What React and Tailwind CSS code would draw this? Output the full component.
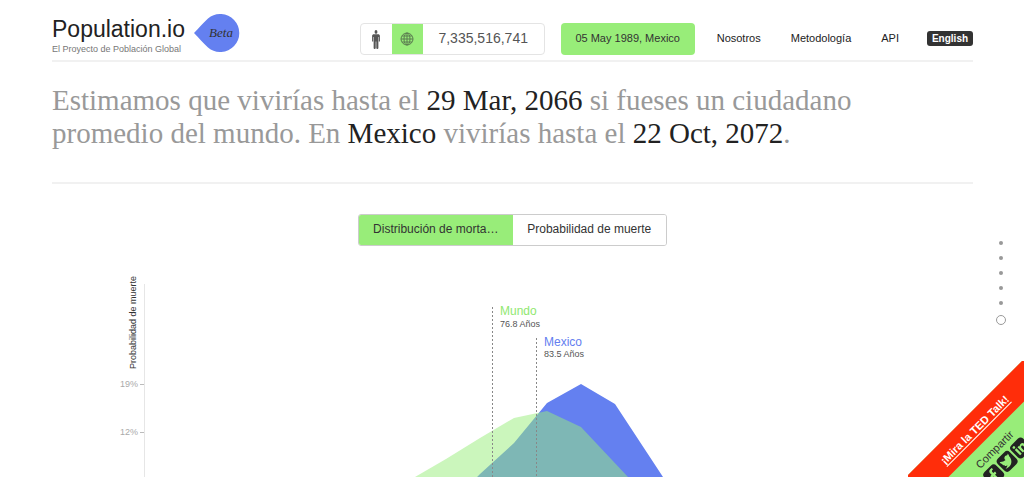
import { useState } from 'react'
import { FaFacebookF, FaLinkedinIn, FaTwitter } from 'react-icons/fa'

const NAV = ['Nosotros', 'Metodología', 'API']
const SECTIONS = ['Inicio', 'Reloj', 'Hitos', 'Cumpleaños', 'Continentes', 'Esperanza de vida']
const SHARE = [
  { label: 'Facebook', Icon: FaFacebookF },
  { label: 'Twitter', Icon: FaTwitter },
  { label: 'LinkedIn', Icon: FaLinkedinIn },
]

function PersonIcon() {
  return (
    <svg viewBox="0 0 10 20" className="h-[19px] w-[10px] fill-[#555]" aria-hidden="true">
      <ellipse cx="5" cy="2" rx="1.5" ry="2" />
      <path d="M2.800 4.500h4.400c1.100 0 1.900.7 1.900 1.700v6H8V7.400h-.5V19c0 .6-.4 1-1.100 1s-1.100-.4-1.100-1v-7h-.6v7c0 .6-.4 1-1.100 1s-1.100-.4-1.100-1V7.400H2v4.800H.9v-6c0-1 .8-1.700 1.900-1.700z" />
    </svg>
  )
}

function GlobeIcon() {
  return (
    <svg viewBox="0 0 14 14" className="size-[14px] fill-none stroke-[#5b7d50]" aria-hidden="true">
      <circle cx="7" cy="7" r="6" />
      <ellipse cx="7" cy="7" rx="3" ry="6" />
      <path d="M7 1v12M1 7h12M2 4h10M2 10h10" />
    </svg>
  )
}

function Logo() {
  return (
    <a href="#home" className="flex items-start gap-[9px]">
      <span className="block pt-px">
        <span className="block text-[23px] leading-7 text-[#222]">Population.io</span>
        <span className="block text-[9px] leading-3 text-[#777]">El Proyecto de Población Global</span>
      </span>
      <span className="relative grid h-[38px] w-[46px] place-items-center">
        <svg viewBox="0 0 46 38" className="absolute inset-0 fill-[#6480f0]" aria-hidden="true">
          <path d="M0 19C5 14 9 9 14 4.500A19 19 0 1 1 14 33.500C9 29 5 24 0 19z" />
        </svg>
        <span className="relative pl-2 font-['Liberation_Serif',serif] text-[13px] italic text-[#333]">Beta</span>
      </span>
    </a>
  )
}

function Header() {
  return (
    <header className="flex h-[62px] items-start justify-between border-b-2 border-[#f1f1f1] pt-[14px]">
      <Logo />
      <div className="flex items-center pt-[9px]">
        <div className="flex h-8 overflow-hidden rounded border border-[#e4e4e4]">
          <button aria-label="País" className="grid w-[31px] place-items-center"><PersonIcon /></button>
          <button aria-label="Mundo" className="grid w-[31px] place-items-center bg-[#98ed79]"><GlobeIcon /></button>
          <span className="w-[121px] text-center text-[14px] leading-7 text-[#555]">7,335,516,741</span>
        </div>
        <button className="ml-4 h-8 w-[134px] rounded bg-[#98ed79] pb-0.5 text-[11px] text-[#333]">05 May 1989, Mexico</button>
        <nav className="ml-[22px] flex gap-[30px] pb-0.5 text-[11px] text-[#222]">
          {NAV.map(n => <a key={n} href={`#${n.toLowerCase()}`}>{n}</a>)}
        </nav>
        <button className="mb-0.5 ml-7 h-[15px] w-[46px] rounded-[3px] bg-[#333] text-[10px] leading-[15px] font-bold text-white">English</button>
      </div>
    </header>
  )
}

function Tabs() {
  const [tab, setTab] = useState(0)
  const labels = ['Distribución de morta…', 'Probabilidad de muerte']
  return (
    <div className="mx-auto mt-[30px] flex h-8 w-[309px] overflow-hidden rounded-[3px] border border-[#ccc]">
      {labels.map((l, i) => (
        <button key={l} onClick={() => setTab(i)} className={`flex-1 pb-0.5 text-[12px] text-[#333] ${tab === i ? 'bg-[#98ed79]' : 'bg-white'}`}>{l}</button>
      ))}
    </div>
  )
}

function MortalityChart() {
  return (
    <svg viewBox="0 0 921 260" className="mt-4 block w-full" role="img" aria-label="Distribución de mortalidad">
      <path d="M92.500 22V260" className="stroke-[#e6e6e6]" />
      <path d="M88 122.500h4M88 170.500h4" className="stroke-[#bbb]" />
      <text transform="translate(84 107) rotate(-90)" className="fill-[#333] text-[9px]">Probabilidad de muerte</text>
      <g className="fill-[#aaa] text-[9px]" textAnchor="end">
        <text x="86" y="125">19%</text>
        <text x="86" y="173">12%</text>
      </g>
      <path d="M381 260L428 212L462 181L495 141L529 122L563 142L611 215L640 260z" className="fill-[#6480f0]" />
      <path d="M310 242L363 215L394 197L428 176L462 156L495 149L529 165L576 215L620 260z" className="fill-[#98ed79]/50" />
      <g className="stroke-[#888]" strokeDasharray="2 2">
        <path d="M440.500 45V260" />
        <path d="M484.500 76V260" />
      </g>
      <text x="448" y="53" className="fill-[#8fe870] text-[12px]">Mundo</text>
      <text x="448" y="65" className="fill-[#555] text-[9px]">76.8 Años</text>
      <text x="492" y="84" className="fill-[#6480f0] text-[12px]">Mexico</text>
      <text x="492" y="95" className="fill-[#555] text-[9px]">83.5 Años</text>
    </svg>
  )
}

function PageDots() {
  return (
    <nav className="fixed top-[235px] right-[18px] flex flex-col items-center" aria-label="Secciones">
      {SECTIONS.map((s, i) => (
        <a key={s} href={`#s${i}`} aria-label={s} className="grid h-[15px] w-[11px] place-items-center">
          <span className={i === SECTIONS.length - 1 ? 'mt-1 size-[10px] rounded-full border border-[#999] bg-white' : 'size-1 rounded-full bg-[#999]'} />
        </a>
      ))}
    </nav>
  )
}

function ShareCorner() {
  return (
    <aside className="fixed right-0 bottom-0 size-[116px] overflow-hidden">
      <div className="absolute top-[58px] left-[-64px] w-[240px] origin-top -rotate-45 bg-[#98ed79] pb-20 text-center">
        <a href="#ted" className="block h-[30px] bg-[#ff2d0a] text-[11px] leading-[30px] font-bold text-white underline underline-offset-2">¡Mira la TED Talk!</a>
        <div className="pt-[6px] text-[11px] leading-[14px] text-[#333]">Compartir</div>
        <div className="mt-0.5 flex justify-center gap-0.5">
          {SHARE.map(({ label, Icon }) => (
            <a key={label} href={`#${label.toLowerCase()}`} aria-label={label} className="grid size-[17px] place-items-center rounded bg-[#222] text-[13px] text-[#98ed79]"><Icon /></a>
          ))}
        </div>
      </div>
    </aside>
  )
}

export default function App() {
  return (
    <div className="h-screen overflow-hidden bg-white pr-[51px] pl-[52px] font-['Liberation_Sans',Arial,sans-serif]">
      <Header />
      <main>
        <section className="border-b-2 border-[#f1f1f1] pt-[22px] pb-8">
          <p className="font-['Liberation_Serif',serif] text-[29px] leading-[33px] text-[#999]">
            Estimamos que vivirías hasta el <span className="text-[#222]">29 Mar, 2066</span> si fueses un ciudadano <br />
            promedio del mundo. En <span className="text-[#222]">Mexico</span> vivirías hasta el <span className="text-[#222]">22 Oct, 2072</span>.
          </p>
        </section>
        <Tabs />
        <MortalityChart />
      </main>
      <PageDots />
      <ShareCorner />
    </div>
  )
}
